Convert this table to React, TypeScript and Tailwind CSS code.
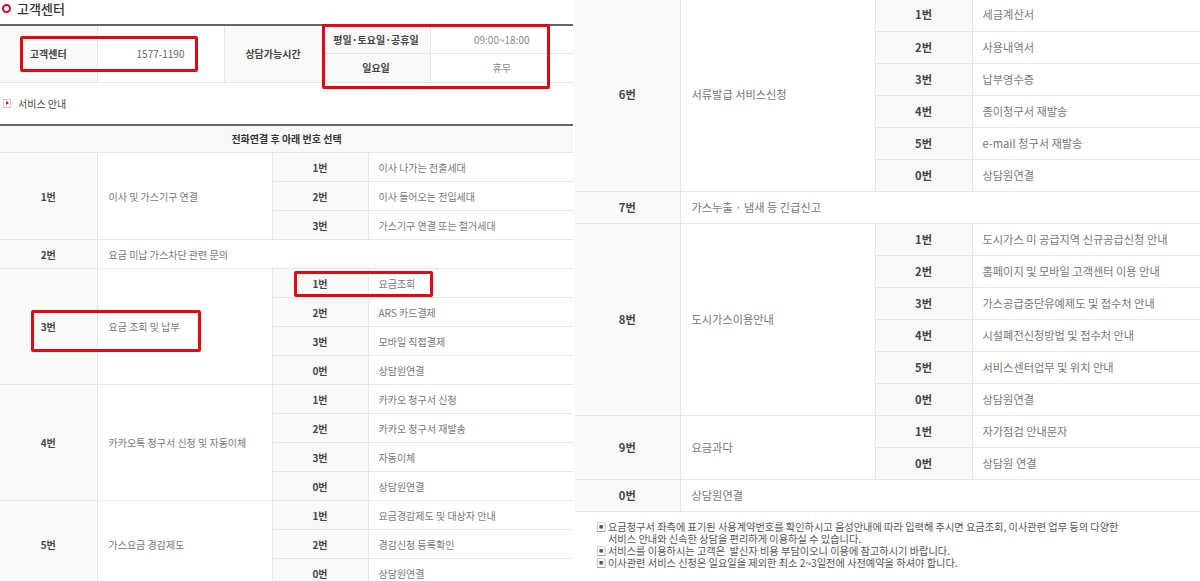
import React from 'react';

type Sub = [string, string];
type Group = { no: string; title: string; subs?: Sub[] };

const leftGroups: Group[] = [
  {
    no: '1번',
    title: '이사 및 가스기구 연결',
    subs: [
      ['1번', '이사 나가는 전출세대'],
      ['2번', '이사 들어오는 전입세대'],
      ['3번', '가스기구 연결 또는 철거세대'],
    ],
  },
  { no: '2번', title: '요금 미납 가스차단 관련 문의' },
  {
    no: '3번',
    title: '요금 조회 및 납부',
    subs: [
      ['1번', '요금조회'],
      ['2번', 'ARS 카드결제'],
      ['3번', '모바일 직접결제'],
      ['0번', '상담원연결'],
    ],
  },
  {
    no: '4번',
    title: '카카오톡 청구서 신청 및 자동이체',
    subs: [
      ['1번', '카카오 청구서 신청'],
      ['2번', '카카오 청구서 재발송'],
      ['3번', '자동이체'],
      ['0번', '상담원연결'],
    ],
  },
  {
    no: '5번',
    title: '가스요금 경감제도',
    subs: [
      ['1번', '요금경감제도 및 대상자 안내'],
      ['2번', '경감신청 등록확인'],
      ['0번', '상담원연결'],
    ],
  },
];

const rightGroups: Group[] = [
  {
    no: '6번',
    title: '서류발급 서비스신청',
    subs: [
      ['1번', '세금계산서'],
      ['2번', '사용내역서'],
      ['3번', '납부영수증'],
      ['4번', '종이청구서 재발송'],
      ['5번', 'e-mail 청구서 재발송'],
      ['0번', '상담원연결'],
    ],
  },
  { no: '7번', title: '가스누출 · 냄새 등 긴급신고' },
  {
    no: '8번',
    title: '도시가스이용안내',
    subs: [
      ['1번', '도시가스 미 공급지역 신규공급신청 안내'],
      ['2번', '홈페이지 및 모바일 고객센터 이용 안내'],
      ['3번', '가스공급중단유예제도 및 접수처 안내'],
      ['4번', '시설폐전신청방법 및 접수처 안내'],
      ['5번', '서비스센터업무 및 위치 안내'],
      ['0번', '상담원연결'],
    ],
  },
  {
    no: '9번',
    title: '요금과다',
    subs: [
      ['1번', '자가점검 안내문자'],
      ['0번', '상담원 연결'],
    ],
  },
  { no: '0번', title: '상담원연결' },
];

const cellB = 'border-b border-[#e6e6e6]';
const cellL = 'border-l border-[#e6e6e6]';

function GroupRows({ groups, rowH }: { groups: Group[]; rowH: string }) {
  return (
    <>
      {groups.map((g) => {
        if (!g.subs) {
          return (
            <tr key={g.no} className={rowH}>
              <td className={`${cellB} bg-[#f9f9f9] text-center font-bold text-[#444]`}>{g.no}</td>
              <td colSpan={3} className={`${cellB} ${cellL} pl-[11px] text-[#777]`}>
                {g.title}
              </td>
            </tr>
          );
        }
        return g.subs.map((s, i) => (
          <tr key={g.no + s[0]} className={rowH}>
            {i === 0 && (
              <>
                <td rowSpan={g.subs!.length} className={`${cellB} bg-[#f9f9f9] text-center font-bold text-[#444]`}>
                  {g.no}
                </td>
                <td rowSpan={g.subs!.length} className={`${cellB} ${cellL} pl-[11px] text-[#777]`}>
                  {g.title}
                </td>
              </>
            )}
            <td className={`${cellB} ${cellL} bg-[#f9f9f9] text-center font-bold text-[#444]`}>{s[0]}</td>
            <td className={`${cellB} ${cellL} pl-[10px] text-[#777]`}>{s[1]}</td>
          </tr>
        ));
      })}
    </>
  );
}

function RedBox({ className }: { className: string }) {
  return <div className={`absolute border-[3px] border-[#dd0a16] rounded-[2px] ${className}`} />;
}

export default function App() {
  return (
    <div
      className="w-[1200px] h-[581px] overflow-hidden bg-white flex"
      style={{ fontFamily: '"Noto Sans CJK KR", "Noto Sans", sans-serif' }}
    >
      {/* left capture */}
      <div className="relative w-[574px] shrink-0">
        <div className="h-[24px] flex items-start pt-[1px] pl-[2px] gap-[6px]">
          <span className="mt-[3px] w-[9px] h-[9px] rounded-full border-2 border-[#c8102e]" />
          <span className="text-[13px] leading-[15px] font-medium text-[#333]">고객센터</span>
        </div>

        <table className="w-[573px] table-fixed border-collapse border-t-2 border-[#666] text-[10px]">
          <colgroup>
            <col className="w-[97px]" />
            <col className="w-[127px]" />
            <col className="w-[98px]" />
            <col className="w-[108px]" />
            <col className="w-[143px]" />
          </colgroup>
          <tbody>
            <tr className="h-[28px]">
              <td rowSpan={2} className={`${cellB} bg-[#f9f9f9] text-center font-bold text-[#444]`}>
                고객센터
              </td>
              <td rowSpan={2} className={`${cellB} ${cellL} text-center text-[#666]`}>
                1577-1190
              </td>
              <td rowSpan={2} className={`${cellB} ${cellL} bg-[#f9f9f9] text-center font-bold text-[#444]`}>
                상담가능시간
              </td>
              <td className={`${cellB} ${cellL} bg-[#f9f9f9] text-center font-bold text-[#444]`}>평일·토요일·공휴일</td>
              <td className={`${cellB} ${cellL} text-center text-[#888]`}>09:00~18:00</td>
            </tr>
            <tr className="h-[29px]">
              <td className={`${cellB} ${cellL} bg-[#f9f9f9] text-center font-bold text-[#444]`}>일요일</td>
              <td className={`${cellB} ${cellL} text-center text-[#888]`}>휴무</td>
            </tr>
          </tbody>
        </table>

        <div className="h-[41px] flex items-center pl-[3px] gap-[7px]">
          <span className="w-[8px] h-[9px] border border-[#ccc] flex items-center justify-center">
            <span className="w-0 h-0 border-y-[2px] border-y-transparent border-l-[3px] border-l-[#c8102e]" />
          </span>
          <span className="text-[10px] text-[#444]">서비스 안내</span>
        </div>

        <table className="w-[573px] table-fixed border-collapse border-t-2 border-[#666] text-[10px]">
          <colgroup>
            <col className="w-[97px]" />
            <col className="w-[175px]" />
            <col className="w-[96px]" />
            <col className="w-[205px]" />
          </colgroup>
          <tbody>
            <tr className="h-[28px]">
              <td colSpan={4} className={`${cellB} bg-[#f9f9f9] text-center font-bold text-[#333]`}>
                전화연결 후 아래 번호 선택
              </td>
            </tr>
            <GroupRows groups={leftGroups} rowH="h-[29px]" />
          </tbody>
        </table>

        <RedBox className="left-[20px] top-[36px] w-[178px] h-[36px]" />
        <RedBox className="left-[322px] top-[24px] w-[228px] h-[65px]" />
        <RedBox className="left-[294px] top-[271px] w-[139px] h-[26px]" />
        <RedBox className="left-[31px] top-[310px] w-[170px] h-[42px]" />
      </div>

      {/* right capture */}
      <div className="ml-[1px] w-[625px] shrink-0 -mt-[1px]">
        <table className="w-[625px] table-fixed border-collapse text-[11.2px]">
          <colgroup>
            <col className="w-[105px]" />
            <col className="w-[195px]" />
            <col className="w-[97px]" />
            <col className="w-[228px]" />
          </colgroup>
          <tbody>
            <GroupRows groups={rightGroups} rowH="h-[32px]" />
          </tbody>
        </table>

        <div className="mt-[9px] pl-[21px] text-[10.2px] leading-[12px] text-[#555]">
          <div className="flex">
            <span className="w-[12px] shrink-0">▣</span>
            <span>
              요금청구서 좌측에 표기된 사용계약번호를 확인하시고 음성안내에 따라 입력해 주시면 요금조회, 이사관련 업무 등의 다양한
              <br />
              서비스 안내와 신속한 상담을 편리하게 이용하실 수 있습니다.
            </span>
          </div>
          <div className="flex">
            <span className="w-[12px] shrink-0">▣</span>
            <span>서비스를 이용하시는 고객은&nbsp; 발신자 비용 부담이오니 이용에 참고하시기 바랍니다.</span>
          </div>
          <div className="flex">
            <span className="w-[12px] shrink-0">▣</span>
            <span>이사관련 서비스 신청은 일요일을 제외한 최소 2~3일전에 사전예약을 하셔야 합니다.</span>
          </div>
        </div>
      </div>
    </div>
  );
}
